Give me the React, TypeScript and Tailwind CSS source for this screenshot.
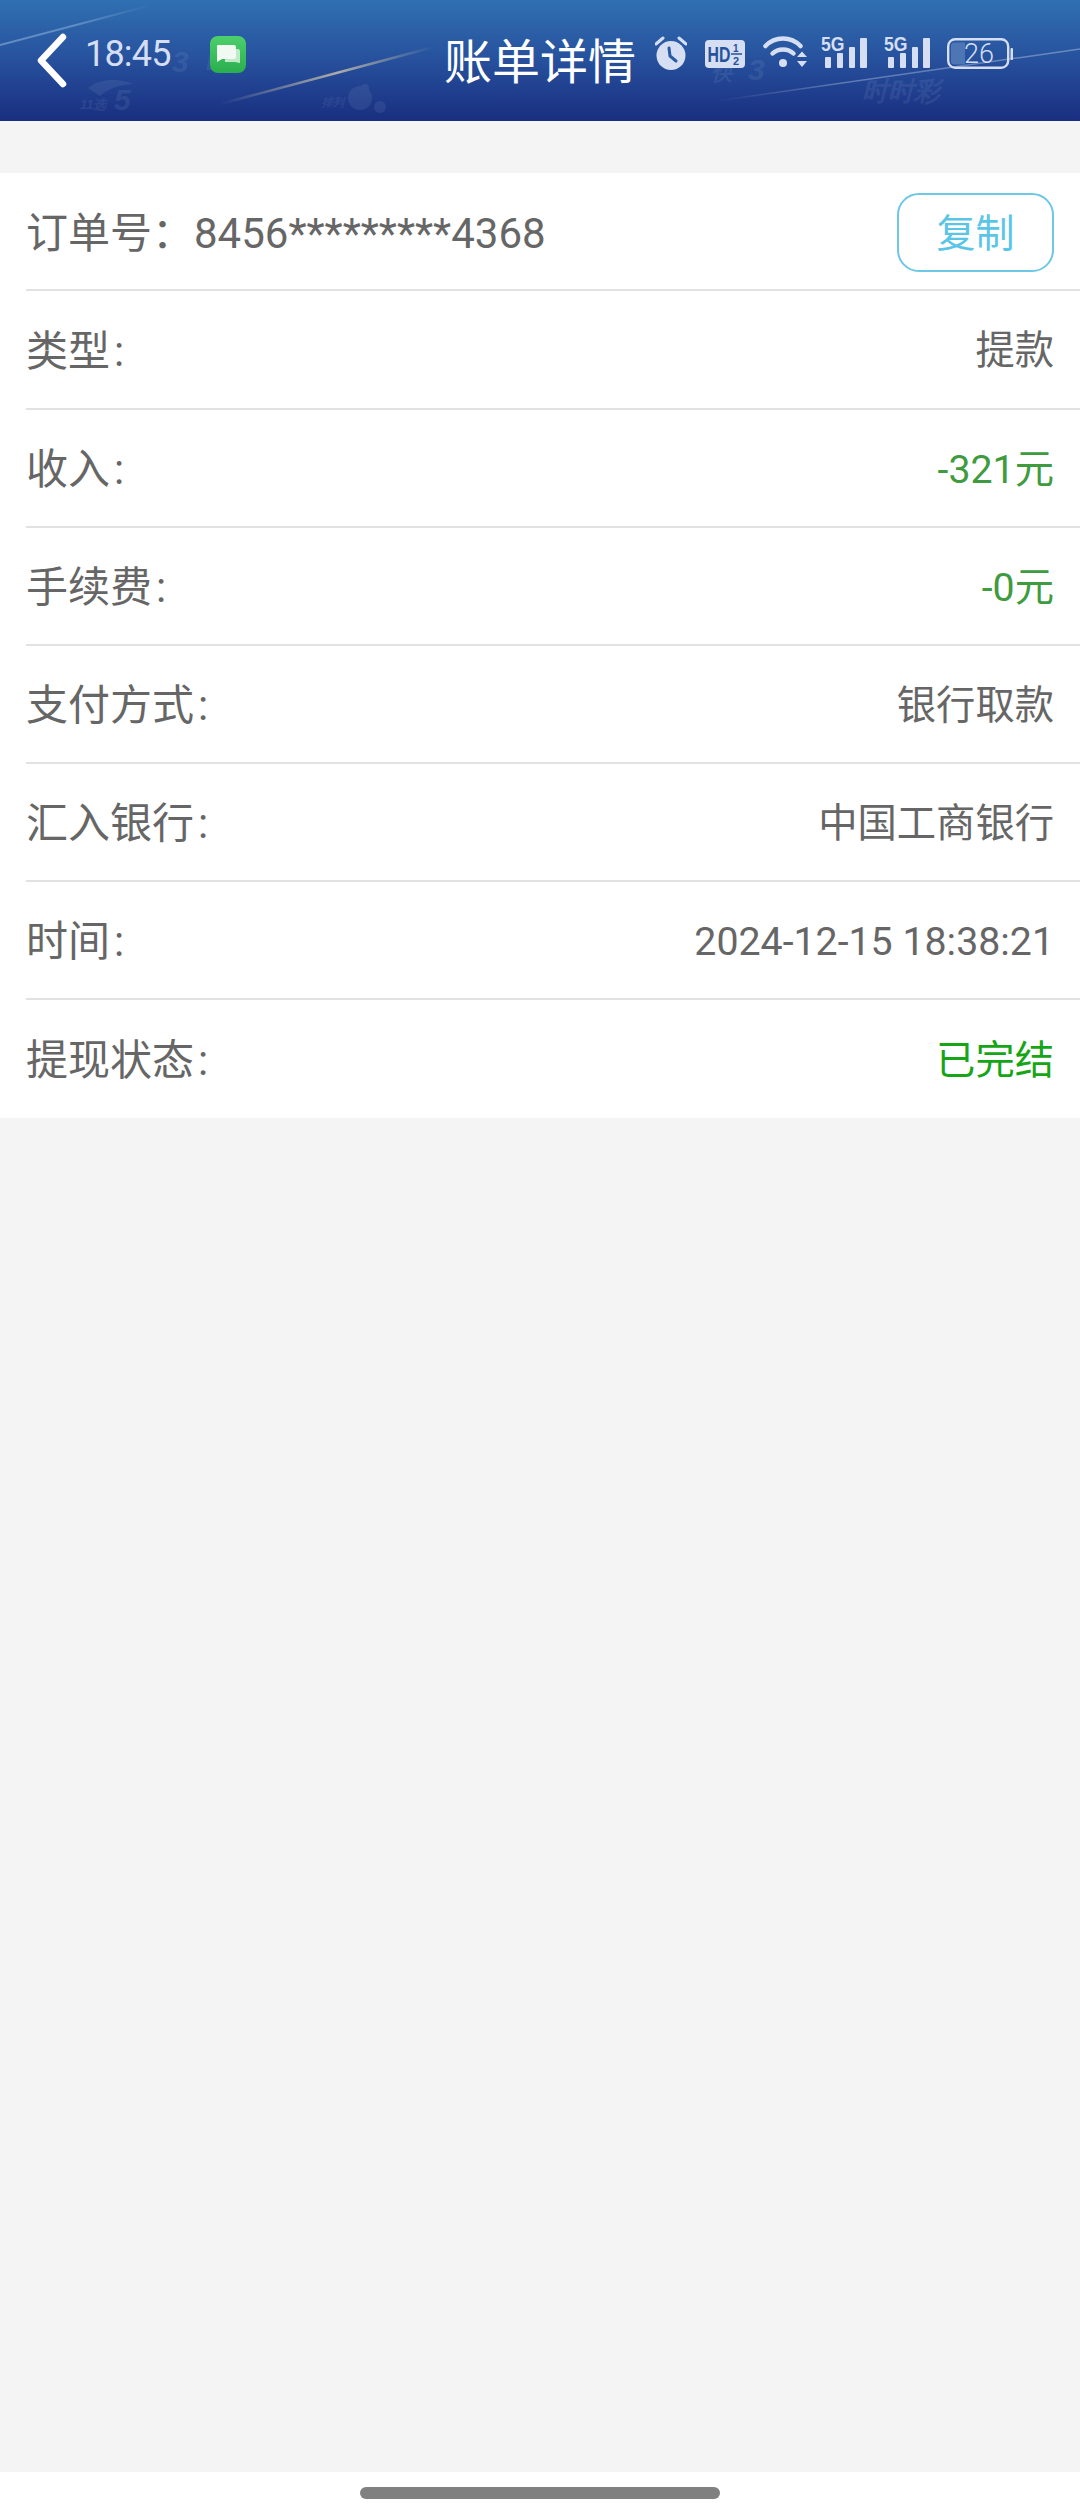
import React from "react";

const ICON = "#d5deF3";
const FONT = "font-['Roboto','Noto_Sans_CJK_SC',sans-serif]";

function HeaderArt() {
  return (
    <svg className="absolute inset-0" width="1080" height="121" viewBox="0 0 1080 121" aria-hidden="true">
      <defs>
        <linearGradient id="s1" x1="0" y1="45" x2="150" y2="6" gradientUnits="userSpaceOnUse">
          <stop offset="0" stopColor="#9fc0e6" stopOpacity="0.5" />
          <stop offset="0.5" stopColor="#9fc0e6" stopOpacity="0.45" />
          <stop offset="1" stopColor="#9fc0e6" stopOpacity="0" />
        </linearGradient>
        <linearGradient id="s2" x1="220" y1="103" x2="434" y2="47" gradientUnits="userSpaceOnUse">
          <stop offset="0" stopColor="#d8cfae" stopOpacity="0" />
          <stop offset="0.55" stopColor="#d8cfae" stopOpacity="0.75" />
          <stop offset="1" stopColor="#d8cfae" stopOpacity="0" />
        </linearGradient>
        <linearGradient id="s3" x1="716" y1="101" x2="1080" y2="49" gradientUnits="userSpaceOnUse">
          <stop offset="0" stopColor="#b8cbe6" stopOpacity="0" />
          <stop offset="0.35" stopColor="#b8cbe6" stopOpacity="0.4" />
          <stop offset="1" stopColor="#b8cbe6" stopOpacity="0.45" />
        </linearGradient>
      </defs>
      <path d="M0 45 L148 6" stroke="url(#s1)" strokeWidth="2" />
      <path d="M220 104 L434 47" stroke="url(#s2)" strokeWidth="2.5" />
      <path d="M716 101 L1080 49" stroke="url(#s3)" strokeWidth="1.5" />
      <g opacity="0.09" fill="#c4d6f2" fontFamily="'Liberation Sans',sans-serif" fontWeight="700" fontStyle="italic">
        <text x="80" y="109" fontSize="13">11选</text>
        <text x="114" y="110" fontSize="30">5</text>
        <path d="M88 88 C100 78 118 78 134 84 C122 84 108 88 100 96 Z" />
        <text x="172" y="72" fontSize="30">3</text>
        <text x="206" y="70" fontSize="22">D</text>
        <text x="322" y="106" fontSize="11">排列</text>
        <circle cx="360" cy="98" r="12" />
        <circle cx="380" cy="107" r="6" />
        <circle cx="365" cy="88" r="4" />
        <text x="712" y="80" fontSize="20">快</text>
        <text x="748" y="80" fontSize="30">3</text>
        <text x="862" y="100" fontSize="26">时时彩</text>
      </g>
    </svg>
  );
}

function Back() {
  return (
    <svg width="32" height="55" viewBox="0 0 32 55" className="shrink-0">
      <path d="M27 4 L5 27.5 L27 51" fill="none" stroke="#fff" strokeWidth="6.5" strokeLinecap="round" strokeLinejoin="round" />
    </svg>
  );
}

function MessageApp() {
  return (
    <svg width="36" height="37" viewBox="0 0 36 37" className="shrink-0">
      <defs>
        <linearGradient id="mg" x1="0" y1="0" x2="0" y2="1">
          <stop offset="0" stopColor="#4ccf6c" />
          <stop offset="1" stopColor="#2aae4e" />
        </linearGradient>
      </defs>
      <rect width="36" height="37" rx="8" fill="url(#mg)" />
      <path d="M15 13 H28 a2 2 0 0 1 2 2 V27 L25 26 H15 Z" fill="#bfe9c9" />
      <path d="M8 9 H24 a2 2 0 0 1 2 2 V21 a2 2 0 0 1 -2 2 H12 L7 26 V10 a1 1 0 0 1 1 -1 Z" fill="#f0faf2" />
    </svg>
  );
}

function Alarm() {
  return (
    <svg width="32" height="34" viewBox="0 0 32 34" className="shrink-0">
      <circle cx="16" cy="19.5" r="14.5" fill={ICON} />
      <path d="M1 8 L8 2 M31 8 L24 2" stroke={ICON} strokeWidth="3" strokeLinecap="round" />
      <path d="M14 12 L15 20 L21 25" fill="none" stroke="#2a5aa2" strokeWidth="3" strokeLinecap="round" strokeLinejoin="round" />
    </svg>
  );
}

function HD() {
  return (
    <svg width="40" height="28" viewBox="0 0 40 28" className="shrink-0 overflow-visible">
      <rect width="40" height="28" rx="4" fill={ICON} />
      <text transform="translate(2.5 22) scale(0.72 1)" fontSize="22" fontWeight="700" fill="#26529c" fontFamily="'Liberation Sans',sans-serif">HD</text>
      <text x="28" y="12" fontSize="10" fontWeight="700" fill="#26529c" fontFamily="'Liberation Sans',sans-serif">1</text>
      <path d="M26 14 H37" stroke="#26529c" strokeWidth="1.5" />
      <text x="28" y="25" fontSize="11" fontWeight="700" fill="#26529c" fontFamily="'Liberation Sans',sans-serif">2</text>
    </svg>
  );
}

function Wifi() {
  return (
    <svg width="44" height="34" viewBox="0 0 44 34" className="shrink-0">
      <g fill="none" stroke={ICON} strokeWidth="4.5" strokeLinecap="round">
        <path d="M2.5 11 C12 1 28 1 37.5 11" />
        <path d="M9.5 18.5 C15 13 25 13 30.5 18.5" />
      </g>
      <circle cx="20" cy="28" r="4" fill={ICON} />
      <path d="M34 22 L39 16.5 L44 22 Z M34 26 L44 26 L39 32 Z" fill={ICON} />
    </svg>
  );
}

function Signal() {
  return (
    <svg width="46" height="33" viewBox="0 0 46 33" className="shrink-0 overflow-visible">
      <text transform="translate(0 16) scale(0.88 1)" fontSize="20" fontWeight="700" fill={ICON} fontFamily="'Liberation Sans',sans-serif">5G</text>
      <rect x="4" y="22" width="6" height="11" rx="1" fill={ICON} />
      <rect x="16" y="18" width="6" height="15" rx="1" fill={ICON} />
      <rect x="28" y="12" width="6" height="21" rx="1" fill={ICON} />
      <rect x="39" y="3" width="7" height="30" rx="1" fill={ICON} />
    </svg>
  );
}

function Battery() {
  return (
    <svg width="66" height="31" viewBox="0 0 66 31" className="shrink-0">
      <rect x="1.2" y="1.2" width="60" height="28.6" rx="7" fill="none" stroke={ICON} strokeWidth="2.4" />
      <path d="M7 4.5 H18 V26.5 H7 a3 3 0 0 1 -3 -3 V7.5 a3 3 0 0 1 3 -3 Z" fill="#4f76b4" />
      <text x="32" y="25" textAnchor="middle" fontSize="27" fontWeight="300" fill={ICON} fontFamily="Roboto,sans-serif">26</text>
      <rect x="63.5" y="10" width="2.5" height="12" rx="1" fill={ICON} />
    </svg>
  );
}

const rows = [
  { label: "类型", value: "提款", color: "text-[#666666]", h: "h-[119px]" },
  { label: "收入", value: "-321元", color: "text-[#3f9b3f]", h: "h-[118px]" },
  { label: "手续费", value: "-0元", color: "text-[#3f9b3f]", h: "h-[118px]" },
  { label: "支付方式", value: "银行取款", color: "text-[#666666]", h: "h-[118px]" },
  { label: "汇入银行", value: "中国工商银行", color: "text-[#666666]", h: "h-[118px]" },
  { label: "时间", value: "2024-12-15 18:38:21", color: "text-[#666666]", h: "h-[118px]" },
  { label: "提现状态", value: "已完结", color: "text-[#16a516]", h: "h-[118px]" },
];

export default function App() {
  return (
    <div className={`flex min-h-[2520px] w-[1080px] flex-col bg-[#f4f4f4] ${FONT}`}>
      <header className="relative h-[121px] bg-gradient-to-b from-[#3070b2] via-[#27509c] to-[#1a2e80]">
        <HeaderArt />
        <div className="relative grid h-full grid-cols-[1fr_auto_1fr] items-start">
          <div className="flex items-start pl-[36px]">
            <div className="mt-[33px]"><Back /></div>
            <span className="ml-[17px] mt-[33px] text-[36px] leading-[42px] tracking-[-0.8px] text-[#d5deF3]">18:45</span>
            <div className="ml-[39px] mt-[36px]"><MessageApp /></div>
          </div>
          <h1 className="mt-[38px] text-[48px] font-normal leading-[50px] text-white">账单详情</h1>
          <div className="flex items-start pl-[19px] pt-[35px]">
            <div className="mt-px"><Alarm /></div>
            <div className="ml-[18px] mt-[5px]"><HD /></div>
            <div className="ml-[18px]"><Wifi /></div>
            <div className="ml-[14px]"><Signal /></div>
            <div className="ml-[17px]"><Signal /></div>
            <div className="ml-[17px] mt-[3px]"><Battery /></div>
          </div>
        </div>
      </header>

      <main className="mt-[52px] bg-white">
        <div className="ml-[26px] flex h-[118px] items-center justify-between border-b-2 border-[#e2e2e2] pr-[26px]">
          <span className="pt-[4px] text-[42px] text-[#666666]">订单号：8456*********4368</span>
          <button className="mt-[3px] flex h-[79px] w-[157px] items-center justify-center rounded-[22px] border-2 border-[#6cc8e6] pt-[3px] text-[39px] text-[#5bc5e8]">
            复制
          </button>
        </div>
        {rows.map((r, i) => (
          <div
            key={r.label}
            className={`ml-[26px] flex items-center justify-between pr-[26px] ${r.h} ${i < rows.length - 1 ? "border-b-2 border-[#e2e2e2]" : ""}`}
          >
            <span className="pt-[3px] text-[42px] text-[#666666]">
              {r.label}
              <span className="ml-[4px]">:</span>
            </span>
            <span className={`pt-[4px] text-[39.3px] ${r.color}`}>{r.value}</span>
          </div>
        ))}
      </main>

      <div className="flex-1" />

      <footer className="flex h-[48px] justify-center bg-white pt-[15px]">
        <div className="h-[12px] w-[360px] rounded-full bg-[#808080]" />
      </footer>
    </div>
  );
}
